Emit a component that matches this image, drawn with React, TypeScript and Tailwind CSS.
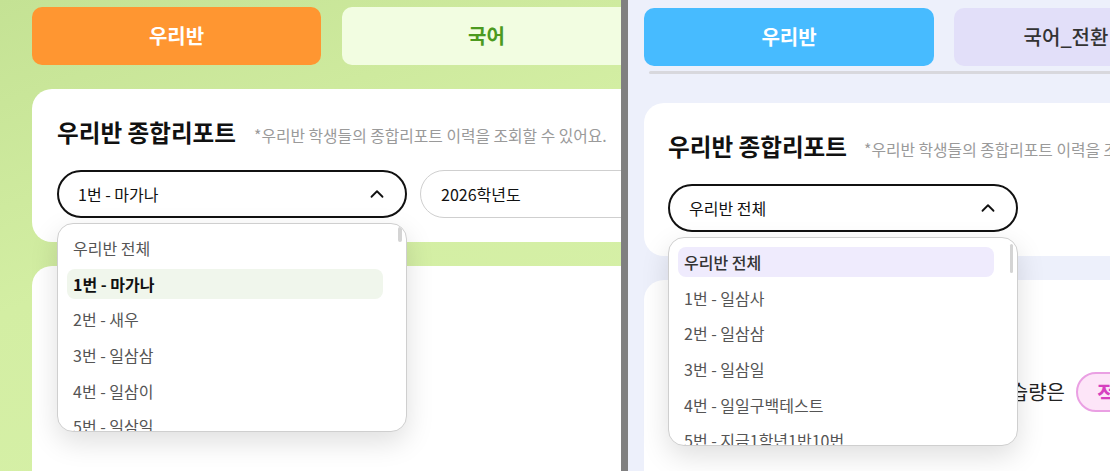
import React from "react";
import { ChevronUp } from "lucide-react";

const font = { fontFamily: '"Noto Sans CJK KR", "Noto Sans", sans-serif' };

type DDProps = {
  items: string[];
  active: number;
  activeClass: string;
  activeText: string;
  barClass: string;
};

function Dropdown({ items, active, activeClass, activeText, barClass }: DDProps) {
  return (
    <div className="absolute left-0 top-[calc(100%+5px)] z-10 h-[209px] w-full overflow-hidden rounded-[16px] border border-[#cfcfcf] bg-white shadow-[0_10px_28px_rgba(0,0,0,0.13)]">
      <div className={barClass} />
      <div className="flex flex-col gap-[5.7px] pl-[9px] pr-[23px] pt-[9px]">
        {items.map((t, i) => (
          <div
            key={t}
            className={
              "flex h-[30px] shrink-0 items-center rounded-[8px] pl-[6px] text-[16px] leading-[20px] " +
              (i === active ? activeClass + " " + activeText : "text-[#555]")
            }
          >
            {t}
          </div>
        ))}
      </div>
    </div>
  );
}

function Select({ label, strong }: { label: string; strong?: boolean }) {
  return (
    <div
      className={
        "flex h-[48px] w-[350px] shrink-0 items-center justify-between rounded-full bg-white pr-[17px] text-[16px] leading-[20px] text-[#111] " +
        (strong ? "border-2 border-[#111] pl-[19px]" : "border border-[#cfcfcf] pl-[20px]")
      }
    >
      <span>{label}</span>
      {strong ? <ChevronUp size={22} strokeWidth={2} className="text-[#111]" /> : null}
    </div>
  );
}

export default function App() {
  return (
    <div className="flex h-[471px] w-[1110px] overflow-hidden" style={font}>
      {/* LEFT PANEL */}
      <div className="h-full w-[621px] shrink-0 overflow-hidden bg-[linear-gradient(160deg,#c4e294_0%,#d3eea3_45%,#d7f1a9_100%)]">
        <div className="w-[1100px] pl-[32px] pt-[7px]">
          <div className="flex gap-[21px]">
            <div className="flex h-[58px] w-[289px] items-center justify-center rounded-[10px] bg-[#ff9631] text-[20px] font-bold leading-[26px] text-white">
              우리반
            </div>
            <div className="flex h-[58px] w-[289px] items-center justify-center rounded-[10px] bg-[#f2fde1] text-[20px] font-semibold leading-[26px] text-[#4c9a1f]">
              국어
            </div>
          </div>
          <div className="mt-[24px] h-[153px] rounded-[20px] bg-white pl-[25px] pt-[27px]">
            <div className="flex items-baseline gap-[18px]">
              <span className="text-[23.6px] font-bold leading-[32px] text-[#111]">우리반 종합리포트</span>
              <span className="text-[15.8px] leading-[20px] text-[#9a9a9a]">
                *우리반 학생들의 종합리포트 이력을 조회할 수 있어요.
              </span>
            </div>
            <div className="mt-[22px] flex gap-[13px]">
              <div className="relative">
                <Select label="1번 - 마가나" strong />
                <Dropdown
                  items={["우리반 전체", "1번 - 마가나", "2번 - 새우", "3번 - 일삼삼", "4번 - 일삼이", "5번 - 일삼일", "6번 - 일이삼"]}
                  active={1}
                  activeClass="bg-[#f0f6ec]"
                  activeText="font-bold text-[#111]"
                  barClass="absolute right-[4px] top-[3px] h-[15px] w-[4px] rounded-[2px] bg-[#d4d4d4]"
                />
              </div>
              <Select label="2026학년도" />
            </div>
          </div>
          <div className="mt-[24px] h-[400px] rounded-[20px] bg-white" />
        </div>
      </div>

      {/* DIVIDER */}
      <div className="h-full w-[7px] shrink-0 bg-[#808080]" />

      {/* RIGHT PANEL */}
      <div className="h-full flex-1 overflow-hidden bg-[#edf0fb]">
        <div className="w-[1100px] pl-[16px] pt-[8px]">
          <div className="flex gap-[20px]">
            <div className="flex h-[58px] w-[290px] items-center justify-center rounded-[10px] bg-[#47bbff] text-[20px] font-semibold leading-[26px] text-white">
              우리반
            </div>
            <div className="flex h-[58px] w-[224px] items-center justify-center rounded-[10px] bg-[#e2dff9] text-[20px] font-medium leading-[26px] text-[#333]">
              국어_전환
            </div>
          </div>
          <div className="ml-[5px] mt-[5px] h-[3px] rounded-[2px] bg-[#d8d8dd]" />
          <div className="mt-[29px] h-[153px] rounded-[20px] bg-white pl-[24px] pt-[27px]">
            <div className="flex items-baseline gap-[17px]">
              <span className="text-[23.6px] font-bold leading-[32px] text-[#111]">우리반 종합리포트</span>
              <span className="text-[15.8px] leading-[20px] text-[#9a9a9a]">
                *우리반 학생들의 종합리포트 이력을 조회할 수 있어요.
              </span>
            </div>
            <div className="mt-[22px] flex">
              <div className="relative">
                <Select label="우리반 전체" strong />
                <Dropdown
                  items={["우리반 전체", "1번 - 일삼사", "2번 - 일삼삼", "3번 - 일삼일", "4번 - 일일구백테스트", "5번 - 지금1학년1반10번", "6번 - 일삼이"]}
                  active={0}
                  activeClass="bg-[#efebfd]"
                  activeText="font-medium text-[#333]"
                  barClass="absolute right-[4px] top-[6px] h-[29px] w-[3px] rounded-[2px] bg-[#d4d4d4]"
                />
              </div>
            </div>
          </div>
          <div className="mt-[24px] h-[400px] rounded-[20px] bg-white pt-[92px]">
            <div className="flex items-center">
              <div className="w-[421px] shrink-0 whitespace-nowrap text-right text-[20px] leading-[28px] text-[#222]">
                이번 달 우리반 평균 학습량은
              </div>
              <div className="ml-[11px] flex h-[40px] w-[120px] shrink-0 items-center rounded-full border-2 border-[#eaa0e3] bg-[#fde5f8] pl-[19px] text-[22px] font-bold leading-[28px] text-[#d640bf]">
                적정
              </div>
            </div>
          </div>
        </div>
      </div>
    </div>
  );
}
